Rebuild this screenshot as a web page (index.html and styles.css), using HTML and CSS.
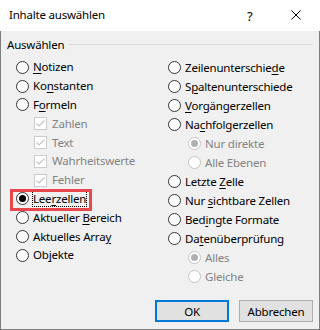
FILE: index.html
```html
<!DOCTYPE html>
<html lang="de">
<head>
<meta charset="utf-8">
<link rel="stylesheet" href="styles.css">
</head>
<body>
<div class="window">
  <div class="titlebar">
    <span class="title">Inhalte auswählen</span>
    <span class="help">?</span>
    <svg class="close" width="10" height="10" viewBox="0 0 10 10"><path d="M0.5 0.5L9.5 9.5M9.5 0.5L0.5 9.5" stroke="#000" stroke-width="1"/></svg>
  </div>
  <div class="body">
    <div class="group-head"><span class="group-label">Auswählen</span><span class="group-line"></span></div>
    <div class="columns">
      <div class="col col-left">
        <div class="row"><span class="radio"></span><span class="lbl"><u>N</u>otizen</span></div>
        <div class="row"><span class="radio"></span><span class="lbl">Ko<u>n</u>stanten</span></div>
        <div class="row"><span class="radio"></span><span class="lbl">F<u>o</u>rmeln</span></div>
        <div class="row sub dis"><span class="check"><svg width="13" height="13" viewBox="0 0 13 13"><path d="M2.5 6.5L5 9L10.5 3.5" fill="none" stroke="#c4c4c4" stroke-width="1.2"/></svg></span><span class="lbl">Zahlen</span></div>
        <div class="row sub dis"><span class="check"><svg width="13" height="13" viewBox="0 0 13 13"><path d="M2.5 6.5L5 9L10.5 3.5" fill="none" stroke="#c4c4c4" stroke-width="1.2"/></svg></span><span class="lbl">Text</span></div>
        <div class="row sub dis"><span class="check"><svg width="13" height="13" viewBox="0 0 13 13"><path d="M2.5 6.5L5 9L10.5 3.5" fill="none" stroke="#c4c4c4" stroke-width="1.2"/></svg></span><span class="lbl">Wahrheitswerte</span></div>
        <div class="row sub dis"><span class="check"><svg width="13" height="13" viewBox="0 0 13 13"><path d="M2.5 6.5L5 9L10.5 3.5" fill="none" stroke="#c4c4c4" stroke-width="1.2"/></svg></span><span class="lbl">Fehler</span></div>
        <div class="row marked"><span class="radio on"></span><span class="lbl focus">Lee<u>r</u>zellen</span></div>
        <div class="row"><span class="radio"></span><span class="lbl">Aktueller <u>B</u>ereich</span></div>
        <div class="row"><span class="radio"></span><span class="lbl">Aktuelles Arra<u>y</u></span></div>
        <div class="row"><span class="radio"></span><span class="lbl">Ob<u>j</u>ekte</span></div>
      </div>
      <div class="col col-right">
        <div class="row"><span class="radio"></span><span class="lbl">Zeilenunterschie<u>d</u>e</span></div>
        <div class="row"><span class="radio"></span><span class="lbl">S<u>p</u>altenunterschiede</span></div>
        <div class="row"><span class="radio"></span><span class="lbl"><u>V</u>orgängerzellen</span></div>
        <div class="row"><span class="radio"></span><span class="lbl">Na<u>c</u>hfolgerzellen</span></div>
        <div class="row sub2 dis"><span class="radio on"></span><span class="lbl">Nur direkte</span></div>
        <div class="row sub2 dis"><span class="radio"></span><span class="lbl">Alle Ebenen</span></div>
        <div class="row"><span class="radio"></span><span class="lbl">Letzte <u>Z</u>elle</span></div>
        <div class="row"><span class="radio"></span><span class="lbl">Nur <u>s</u>ichtbare Zellen</span></div>
        <div class="row"><span class="radio"></span><span class="lbl">Bed<u>i</u>ngte Formate</span></div>
        <div class="row"><span class="radio"></span><span class="lbl">Da<u>t</u>enüberprüfung</span></div>
        <div class="row sub2 dis"><span class="radio on"></span><span class="lbl">Alles</span></div>
        <div class="row sub2 dis"><span class="radio"></span><span class="lbl">Gleiche</span></div>
      </div>
    </div>
    <div class="buttons">
      <button class="btn default">OK</button>
      <button class="btn">Abbrechen</button>
    </div>
  </div>
</div>
</body>
</html>
```
FILE: styles.css
```css
html, body {
  margin: 0;
  padding: 0;
  background: #f0f0f0;
}
body {
  font-family: "Noto Sans", sans-serif;
  font-size: 11.5px;
  letter-spacing: -0.2px;
  color: #000;
}
.window {
  width: 320px;
  height: 330px;
  display: flex;
  flex-direction: column;
}
.titlebar {
  height: 31px;
  background: #fff;
  display: flex;
  align-items: center;
  padding-left: 9px;
  box-sizing: border-box;
}
.title {
  flex: 1;
  line-height: 16px;
  padding-bottom: 1px;
}
.help {
  width: 10px;
  margin-right: 34px;
  font-size: 13px;
  line-height: 16px;
}
.close {
  margin-right: 19px;
  margin-bottom: 1px;
}
.body {
  flex: 1;
  border: 1px solid #7f7f7f;
  border-top: none;
  display: flex;
  flex-direction: column;
  padding: 0 6px 7px 6px;
}
.group-head {
  display: flex;
  align-items: center;
  height: 16px;
  margin-top: 6px;
}
.group-label {
  line-height: 16px;
  padding-right: 5px;
}
.group-line {
  flex: 1;
  height: 1px;
  background: #dcdcdc;
  margin-top: -2px;
}
.columns {
  display: flex;
  margin-top: 5px;
}
.col {
  display: flex;
  flex-direction: column;
}
.col-left {
  width: 152px;
  padding-left: 9px;
}
.col-left .row {
  height: 18.8px;
}
.col-right .row {
  height: 19px;
}
.row {
  display: flex;
  align-items: center;
  white-space: nowrap;
}
.row.sub {
  padding-left: 18px;
}
.row.sub2 {
  padding-left: 20px;
}
.radio {
  width: 13px;
  height: 13px;
  box-sizing: border-box;
  border: 1px solid #333;
  border-radius: 50%;
  background: #fff;
  margin-right: 4px;
  flex: none;
  display: flex;
  align-items: center;
  justify-content: center;
}
.radio.on::after {
  content: "";
  width: 7px;
  height: 7px;
  border-radius: 50%;
  background: #000;
}
.check {
  width: 13px;
  height: 13px;
  box-sizing: border-box;
  border: 1px solid #cccccc;
  background: #fff;
  margin-right: 5px;
  flex: none;
  display: flex;
}
.check svg {
  margin: -1px;
}
.dis .lbl {
  color: #838383;
}
.dis .radio {
  border-color: #c4c4c4;
}
.dis .radio.on::after {
  background: #b0b0b0;
}
.lbl {
  line-height: 16px;
}
.lbl u {
  text-decoration-thickness: 1px;
  text-underline-offset: 2px;
}
.marked {
  position: relative;
}
.marked::after {
  content: "";
  position: absolute;
  left: -6px;
  top: -1px;
  width: 82px;
  height: 22px;
  box-sizing: border-box;
  border: 3px solid #e8474c;
}
.focus {
  outline: 1px dotted #000;
  outline-offset: -1px;
  padding: 0 1px;
  margin-left: -1px;
}
.buttons {
  margin-top: auto;
  display: flex;
  justify-content: flex-end;
  gap: 10px;
}
.btn {
  width: 74px;
  height: 22px;
  box-sizing: border-box;
  border: 1px solid #adadad;
  background: #e1e1e1;
  font-family: "Noto Sans", sans-serif;
  font-size: 11.5px;
  letter-spacing: -0.2px;
  color: #000;
  padding: 0;
  margin: 0;
}
.btn.default {
  border: 2px solid #0078d7;
}
```
